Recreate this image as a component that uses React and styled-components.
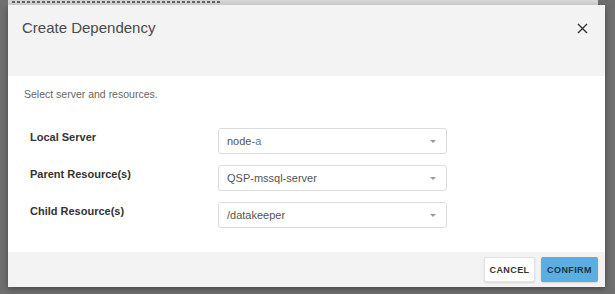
import React from 'react';
import styled, { createGlobalStyle } from 'styled-components';

const GlobalStyle = createGlobalStyle`
  html, body {
    margin: 0;
    padding: 0;
    background: #6f6f6f;
    font-family: "Liberation Sans", Arial, sans-serif;
  }
`

const Backdrop = styled.div`
  width: 615px;
  height: 294px;
  background: #6f6f6f;
  overflow: hidden;
  display: flex;
  flex-direction: column;
`

// the page behind the modal just peeks out at the top
const PeekStrip = styled.div`
  height: 5px;
  margin-left: 8px;
  width: 590px;
  background:
    repeating-linear-gradient(90deg, #666 0 3px, transparent 3px 5px) 4px 1px / 210px 2px no-repeat,
    #d6d6d6;
`

const Modal = styled.div`
  margin-left: 8px;
  width: 597px;
  height: 282px;
  background: #fff;
  display: flex;
  flex-direction: column;
  box-shadow: 0 2px 6px rgba(0,0,0,0.35);
`

const Header = styled.div`
  height: 71px;
  background: #f3f3f3;
  display: flex;
  align-items: flex-start;
  justify-content: space-between;
  padding: 14px 16px 0 14px;
  box-sizing: border-box;

  h3 {
    margin: 0;
    font-size: 15px;
    font-weight: normal;
    color: #4a4a4a;
  }
`

const CloseButton = styled.button`
  border: none;
  background: none;
  padding: 0;
  margin-top: 2px;
  width: 14px;
  height: 14px;
  display: flex;
  align-items: center;
  justify-content: center;
  cursor: pointer;
`

const Body = styled.div`
  flex: 1;
  padding: 12px 16px 0 16px;

  p {
    margin: 0 0 28px 0;
    font-size: 10.5px;
    color: #666;
  }
`

const Row = styled.div`
  display: flex;
  align-items: center;
  margin-bottom: 11px;
`

const Label = styled.div`
  width: 188px;
  padding-left: 6px;
  font-size: 11px;
  font-weight: bold;
  color: #333;
  margin-top: -9px;
`

const Select = styled.div`
  width: 229px;
  height: 26px;
  box-sizing: border-box;
  border: 1px solid #dcdcdc;
  border-radius: 3px;
  background: #fff;
  display: flex;
  align-items: center;
  justify-content: space-between;
  padding: 0 10px 0 8px;
  font-size: 11px;
  color: #555;

  span b {
    font-weight: normal;
    color: #5b7bb5;
  }
`

const Caret = styled.div`
  width: 0;
  height: 0;
  border-left: 3.5px solid transparent;
  border-right: 3.5px solid transparent;
  border-top: 3.5px solid #999;
`

const Footer = styled.div`
  height: 35px;
  background: #f3f3f3;
  display: flex;
  align-items: center;
  justify-content: flex-end;
  gap: 6px;
  padding-right: 7px;
`

const Button = styled.button`
  height: 25px;
  border-radius: 2px;
  font-family: "Liberation Sans", Arial, sans-serif;
  font-size: 9px;
  font-weight: bold;
  letter-spacing: 0.4px;
  padding: 0;
  width: ${p => p.primary ? '57px' : '51px'};
  background: ${p => p.primary ? '#5aaee0' : '#fff'};
  color: ${p => p.primary ? '#1e3246' : '#333'};
  border: ${p => p.primary ? 'none' : '1px solid #e2e2e2'};
  box-shadow: 0 1px 2px rgba(0,0,0,0.12);
`

const fields = [
  { label: 'Local Server', value: <>node-<b>a</b></> },
  { label: 'Parent Resource(s)', value: 'QSP-mssql-server' },
  { label: 'Child Resource(s)', value: '/datakeeper' },
]

export default function App() {
  return (
    <Backdrop>
      <GlobalStyle />
      <PeekStrip />
      <Modal>
        <Header>
          <h3>Create Dependency</h3>
          <CloseButton>
            <svg width="11" height="11" viewBox="0 0 11 11">
              <path d="M1 1 L10 10 M10 1 L1 10" stroke="#333" strokeWidth="1.4" />
            </svg>
          </CloseButton>
        </Header>
        <Body>
          <p>Select server and resources.</p>
          {fields.map(f => (
            <Row key={f.label}>
              <Label>{f.label}</Label>
              <Select>
                <span>{f.value}</span>
                <Caret />
              </Select>
            </Row>
          ))}
        </Body>
        <Footer>
          <Button>CANCEL</Button>
          <Button primary>CONFIRM</Button>
        </Footer>
      </Modal>
    </Backdrop>
  )
}
